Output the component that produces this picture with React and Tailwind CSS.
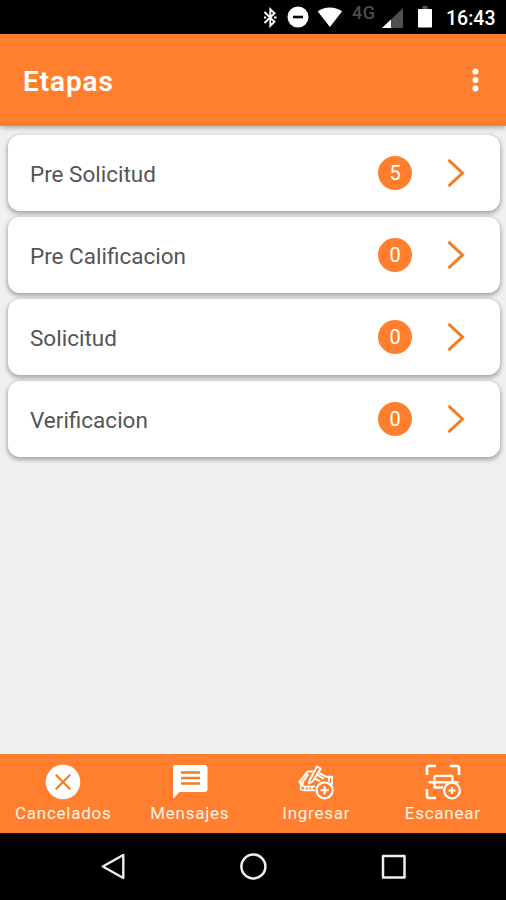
import React from 'react'

const etapas = [
    { nombre: 'Pre Solicitud', total: 5 },
    { nombre: 'Pre Calificacion', total: 0 },
    { nombre: 'Solicitud', total: 0 },
    { nombre: 'Verificacion', total: 0 },
]

function StatusBar() {
    return (
        <div className="flex h-[34px] shrink-0 items-start bg-black pl-[262px] text-white">
            <svg className="mt-[7px] h-[21px] w-4" viewBox="0 0 16 21" fill="none" stroke="currentColor" strokeWidth="1.9">
                <path d="M2.500 5 12.500 14.800 8.300 18.800V2.200L12.500 6.200 2.500 16" />
                <path d="M2 10.500h2.200M12 10.500h2.600" strokeWidth="2" />
            </svg>
            <svg className="mt-[6px] ml-[9px] h-[22px] w-[22px]" viewBox="0 0 22 22">
                <circle cx="11" cy="11" r="10.5" fill="currentColor" />
                <path d="M6 11h10" stroke="#000" strokeWidth="2.6" />
            </svg>
            <svg className="mt-[7px] ml-[8px] h-[20px] w-[26px]" viewBox="0 0 26 20">
                <path d="M.6 4.3C7.5-.8 18-.8 25.200 4.300L12.900 20z" fill="currentColor" />
            </svg>
            <span className="mt-[4px] ml-[9px] w-[26px] text-[18px] leading-[18px] font-medium tracking-[0.4px] text-[#4b4b4b]">4G</span>
            <svg className="mt-[8px] ml-[4px] h-[20px] w-[21px]" viewBox="0 0 21 20">
                <path d="M0 20 21 0v20z" fill="#505050" />
                <path d="M0 20 9 11.400V20z" fill="currentColor" />
            </svg>
            <svg className="mt-[6px] ml-[14px] h-[22px] w-4" viewBox="0 0 16 22">
                <path d="M5.500 0h5v3h-5z" fill="#555" />
                <rect x="1" y="3" width="14" height="18.500" rx=".8" fill="currentColor" />
            </svg>
            <span className="mt-[9px] ml-[13px] text-[19.500px] leading-5 font-medium">16:43</span>
        </div>
    )
}

function Header() {
    return (
        <header className="z-10 flex h-[92px] shrink-0 items-center justify-between bg-[#ff7f2e] pr-[27px] pl-[23px] text-white shadow-[0_2px_5px_rgba(0,0,0,0.28)]">
            <h1 className="pt-[4px] text-[28px] leading-8 font-semibold tracking-[0.9px]">Etapas</h1>
            <svg className="h-6 w-[7px]" viewBox="0 0 7 24" fill="currentColor">
                <circle cx="3.500" cy="3.600" r="3" />
                <circle cx="3.500" cy="12" r="3" />
                <circle cx="3.500" cy="20.400" r="3" />
            </svg>
        </header>
    )
}

function Etapa({ nombre, total }) {
    return (
        <li className="flex h-[76px] items-center rounded-[12px] bg-white pr-[35px] pl-[22px] shadow-[0_2px_4px_1px_rgba(0,0,0,0.3)]">
            <span className="flex-1 pt-[2px] text-[22.500px] leading-7 text-[#555]">{nombre}</span>
            <span className="mr-[34.500px] flex h-[34px] w-[34px] items-center justify-center rounded-full bg-[#ff7f2e] text-[20px] leading-5 text-white">{total}</span>
            <svg className="h-[30px] w-[18px]" viewBox="0 0 18 30" fill="none" stroke="#f47d20" strokeWidth="3">
                <path d="M1.500 1.800 15.500 15 1.500 28.200" />
            </svg>
        </li>
    )
}

function CanceladosIcon() {
    return (
        <svg className="h-9 w-9" viewBox="0 0 36 36">
            <circle cx="18" cy="18" r="17.300" fill="#fff" />
            <path d="M10.800 10.800l14.400 14.400M25.200 10.800 10.800 25.200" stroke="#f47d20" strokeWidth="2.200" />
        </svg>
    )
}

function MensajesIcon() {
    return (
        <svg className="h-9 w-9" viewBox="0 0 36 36">
            <path d="M4 1h28.500a3 3 0 0 1 3 3v21a3 3 0 0 1-3 3H7.500L1 35V4a3 3 0 0 1 3-3z" fill="#fff" />
            <path d="M9 8.500h19M9 14h19M9 19.500h19" stroke="#f47d20" strokeWidth="2.300" />
        </svg>
    )
}

function IngresarIcon() {
    return (
        <svg className="h-9 w-9" viewBox="0 0 36 36" fill="none" stroke="#fff" strokeWidth="2" strokeLinecap="round" strokeLinejoin="round">
            <path d="M11.500 16.500 19 2.500l3.600 2.200-8 12.800-3.600 2z" />
            <path d="M15.500 7.500H9.500L1.500 18l2 2M10 10.500 4.500 18.500v3" />
            <path d="M22 9.500l6 3.300h6V20M31 13v4" />
            <path d="M19.500 11 25 14.500M17.500 15l4 2" />
            <path d="M3 20.500 2.500 25.500l3 .8h11M7 23v3M10.500 23v3M14 23v3M5.500 22.500h11" strokeWidth="1.700" />
            <circle cx="26.600" cy="26.300" r="8" fill="#ff7f2e" strokeWidth="2.200" />
            <path d="M26.600 23v6.600M23.300 26.300h6.600" strokeWidth="2" />
        </svg>
    )
}

function EscanearIcon() {
    return (
        <svg className="h-9 w-9" viewBox="0 0 36 36" fill="none" stroke="#fff" strokeWidth="2.600">
            <path d="M11 2H4a2 2 0 0 0-2 2v7M25 2h7a2 2 0 0 1 2 2v7M2 25v7a2 2 0 0 0 2 2h7" />
            <path d="M9.500 24.200V13.300a1.500 1.500 0 0 1 1.500-1.500h15a1.500 1.500 0 0 1 1.500 1.500v4.200M9.500 23.500H18" strokeWidth="2.300" />
            <path d="M3.500 18.300h30" strokeWidth="2.400" />
            <circle cx="27" cy="26.500" r="7.900" fill="#ff7f2e" strokeWidth="2.200" />
            <path d="M27 23v7M23.500 26.500h7" strokeWidth="2" />
        </svg>
    )
}

function Tab({ label, children }) {
    return (
        <a href="#" className="flex flex-1 flex-col items-center pt-[10px] text-[#fff3e6]">
            {children}
            <span className="mt-[3px] text-[17px] leading-5 tracking-[0.75px]">{label}</span>
        </a>
    )
}

function BottomBar() {
    return (
        <nav className="flex h-[79px] shrink-0 bg-[#ff7f2e]">
            <Tab label="Cancelados"><CanceladosIcon /></Tab>
            <Tab label="Mensajes"><MensajesIcon /></Tab>
            <Tab label="Ingresar"><IngresarIcon /></Tab>
            <Tab label="Escanear"><EscanearIcon /></Tab>
        </nav>
    )
}

function AndroidNav() {
    return (
        <div className="flex h-[67px] shrink-0 items-center justify-between bg-black px-[98px]">
            <svg className="h-[30px] w-[30px]" viewBox="0 0 30 30" fill="none" stroke="#eee" strokeWidth="2.400" strokeLinejoin="round">
                <path d="M25.300 3v23L4.800 14.500z" />
            </svg>
            <svg className="h-[30px] w-[30px]" viewBox="0 0 30 30" fill="none" stroke="#eee" strokeWidth="2.500">
                <circle cx="15.400" cy="14.500" r="12" />
            </svg>
            <svg className="h-[30px] w-[30px]" viewBox="0 0 30 30" fill="none" stroke="#eee" strokeWidth="2.500" strokeLinejoin="round">
                <rect x="5" y="4" width="21.500" height="21.500" />
            </svg>
        </div>
    )
}

function App() {
    return (
        <div className="flex h-[900px] w-[506px] flex-col overflow-hidden bg-[#f0f0f0] font-[Roboto,sans-serif]">
            <StatusBar />
            <Header />
            <main className="flex-1 pt-[8.500px] pr-[6.500px] pl-2">
                <ul className="flex flex-col gap-[6.300px]">
                    {etapas.map((etapa) => (
                        <Etapa key={etapa.nombre} {...etapa} />
                    ))}
                </ul>
            </main>
            <BottomBar />
            <AndroidNav />
        </div>
    )
}

export default App
